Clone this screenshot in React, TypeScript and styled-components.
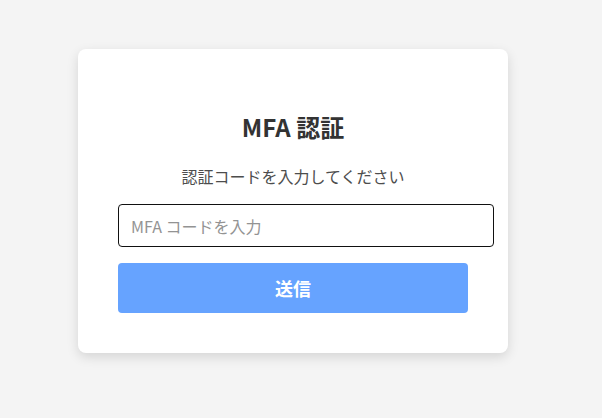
import React from "react";
import styled, { createGlobalStyle } from "styled-components";

const GlobalStyle = createGlobalStyle`
  html, body {
    margin: 0;
    padding: 0;
    background: #f4f4f4;
  }
  body {
    font-family: "Noto Sans CJK JP", "Noto Sans", sans-serif;
    color: #333;
  }
`;

const Page = styled.div`
  min-height: 418px;
  display: flex;
  align-items: flex-start;
  padding: 49px 0 0 78px;
  box-sizing: border-box;
`;

const Card = styled.div`
  width: 350px;
  padding: 40px;
  background: #fff;
  border-radius: 8px;
  box-shadow: 0 4px 12px rgba(0, 0, 0, 0.13);
  display: flex;
  flex-direction: column;
  align-items: center;
`;

const Title = styled.h2`
  margin: 20px 0 0;
  font-size: 24px;
  font-weight: 700;
  line-height: 35px;
  color: #333;
`;

const Subtitle = styled.p`
  margin: 21px 0 0;
  font-size: 16px;
  line-height: 23px;
  color: #4d4d4d;
`;

const Input = styled.input`
  align-self: flex-start;
  margin-top: 16px;
  width: 350px;
  padding: 0 12px;
  box-sizing: content-box;
  height: 41px;
  border: 1px solid #111;
  border-radius: 4px;
  font-family: "Noto Sans CJK JP", "Noto Sans", sans-serif;
  font-size: 16px;
  color: #333;
  outline: none;
  &::placeholder {
    color: #939393;
  }
`;

const Button = styled.button`
  margin-top: 16px;
  width: 350px;
  height: 50px;
  border: none;
  border-radius: 4px;
  background: #66a3ff;
  color: #fff;
  font-family: "Noto Sans CJK JP", "Noto Sans", sans-serif;
  font-size: 18px;
  font-weight: 700;
  cursor: pointer;
`;

export default function App() {
  return (
    <>
      <GlobalStyle />
      <Page>
        <Card>
          <Title>MFA 認証</Title>
          <Subtitle>認証コードを入力してください</Subtitle>
          <Input placeholder="MFA コードを入力" />
          <Button>送信</Button>
        </Card>
      </Page>
    </>
  );
}
